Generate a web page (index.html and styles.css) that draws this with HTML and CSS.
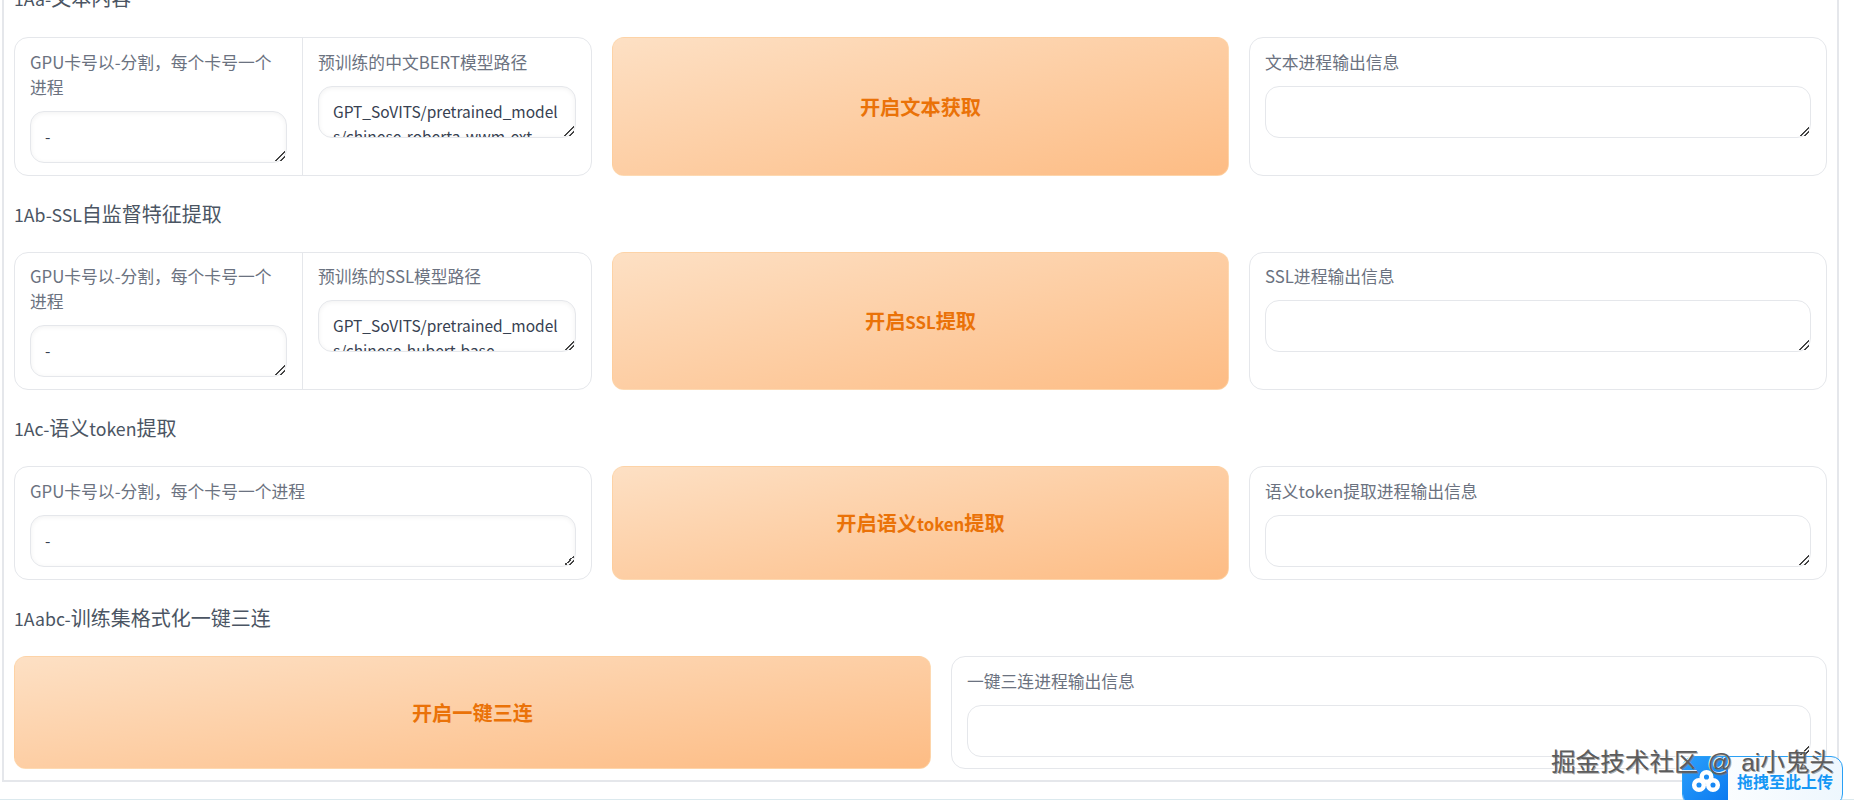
FILE: index.html
```html
<!DOCTYPE html>
<html lang="zh">
<head>
<meta charset="utf-8">
<title>GPT-SoVITS</title>
<link rel="stylesheet" href="styles.css">
</head>
<body>
<main class="frame">
  <h3 class="heading first"><span class="lat">1Aa-</span>文本内容</h3>
  <section class="row row-3">
    <div class="card split">
      <label class="field"><span class="label">GPU卡号以-分割，每个卡号一个进程</span><textarea class="box shaded" rows="2">-</textarea></label>
      <label class="field divided"><span class="label">预训练的中文BERT模型路径</span><textarea class="box shaded" rows="2">GPT_SoVITS/pretrained_models/chinese-roberta-wwm-ext-large</textarea></label>
    </div>
    <button class="action">开启文本获取</button>
    <label class="card field"><span class="label">文本进程输出信息</span><textarea class="box" rows="2"></textarea></label>
  </section>

  <h3 class="heading"><span class="lat">1Ab-SSL</span>自监督特征提取</h3>
  <section class="row row-3 mid">
    <div class="card split">
      <label class="field"><span class="label">GPU卡号以-分割，每个卡号一个进程</span><textarea class="box shaded" rows="2">-</textarea></label>
      <label class="field divided"><span class="label">预训练的SSL模型路径</span><textarea class="box shaded" rows="2">GPT_SoVITS/pretrained_models/chinese-hubert-base</textarea></label>
    </div>
    <button class="action">开启<span class="lat">SSL</span>提取</button>
    <label class="card field"><span class="label">SSL进程输出信息</span><textarea class="box" rows="2"></textarea></label>
  </section>

  <h3 class="heading"><span class="lat">1Ac-</span>语义<span class="lat">token</span>提取</h3>
  <section class="row row-3 short">
    <label class="card field"><span class="label">GPU卡号以-分割，每个卡号一个进程</span><textarea class="box shaded" rows="2">-</textarea></label>
    <button class="action">开启语义<span class="lat">token</span>提取</button>
    <label class="card field"><span class="label">语义token提取进程输出信息</span><textarea class="box" rows="2"></textarea></label>
  </section>

  <h3 class="heading"><span class="lat">1Aabc-</span>训练集格式化一键三连</h3>
  <section class="row row-2">
    <button class="action">开启一键三连</button>
    <label class="card field"><span class="label">一键三连进程输出信息</span><textarea class="box" rows="2"></textarea></label>
  </section>
</main>
<div class="bottom-line"></div>
<aside class="upload">
  <span class="upload-icon">
    <svg viewBox="0 0 46 44" width="46" height="44" aria-hidden="true">
      <g fill="none" stroke="#fff" stroke-width="4.5">
        <circle cx="16" cy="28" r="4.8"/>
        <circle cx="30" cy="28" r="4.8"/>
        <circle cx="23.5" cy="20" r="4.8"/>
      </g>
    </svg>
  </span>
  <span class="upload-text">拖拽至此上传</span>
</aside>
<div class="watermark">掘金技术社区 @ ai小鬼头</div>
</body>
</html>
```
FILE: styles.css
```css
* { box-sizing: border-box; }
html, body { margin: 0; height: 800px; overflow: hidden; background: #fff; }
body {
  font-family: "Noto Sans CJK SC", "Noto Sans", sans-serif;
  color: #374151;
  position: relative;
}
.frame {
  margin: -19px 15px 0 2px;
  height: 801px;
  border: 2px solid #e5e7eb;
  border-top: 0;
  padding: 0 10px;
  background: #fff;
}
.heading {
  margin: 0;
  height: 76px;
  padding-top: 25px;
  font-size: 20px;
  line-height: 26px;
  font-weight: 400;
  color: #4b5563;
}
.heading .lat { font-size: .885em; }
.heading.first { height: 56px; padding-top: 4px; }
.row { display: grid; column-gap: 20px; }
.row-3 { grid-template-columns: 578px 617px 578px; height: 139px; }
.row-3.mid { height: 138px; }
.row-3.short { height: 114px; }
.row-2 { grid-template-columns: 917px 876px; height: 113px; }
.card {
  border: 1px solid #e5e7eb;
  border-radius: 14px;
  background: #fff;
  min-width: 0;
}
.split { display: grid; grid-template-columns: 287px 1fr; }
.divided { border-left: 1px solid #e5e7eb; }
.field { display: flex; flex-direction: column; padding: 12px 15px 0; }
.mid .field { padding-top: 11px; }
.label {
  font-size: 16.8px;
  line-height: 25px;
  color: #6b7280;
  margin-bottom: 11px;
}
.box {
  display: block;
  width: 100%;
  height: 52px;
  padding: 12px 14px 0;
  border: 1px solid #e5e7eb;
  border-radius: 14px;
  font: 15.5px/25px "Noto Sans CJK SC", "Noto Sans", sans-serif;
  color: #374151;
  background: #fff;
  overflow: hidden;
  overflow-wrap: anywhere;
  outline: none;
}
.box::-webkit-resizer {
  background: linear-gradient(135deg, transparent 50%, #444 50%, #444 60%, transparent 60%, transparent 74%, #444 74%, #444 84%, transparent 84%) no-repeat right 1px bottom 1px / 10px 10px;
}
.box.shaded { box-shadow: inset 0 1px 5px rgba(0, 0, 0, .06); }
.action {
  border: 1px solid rgba(254, 215, 170, .6);
  border-radius: 12px;
  background: linear-gradient(to bottom right, #fde0c4, #fdbc84);
  color: #ea7208;
  font: 700 20.2px/26px "Noto Sans CJK SC", "Noto Sans", sans-serif;
}
.action .lat { font-size: .83em; }
.bottom-line { position: absolute; left: 0; right: 0; top: 799px; height: 1px; background: #dbe9ee; }
.upload {
  position: absolute;
  left: 1682px;
  top: 756px;
  width: 161px;
  height: 50px;
  display: flex;
  border: 1px solid #2aa0f5;
  border-radius: 12px;
  background: linear-gradient(90deg, #fff, #eef7fe);
  overflow: hidden;
}
.upload-icon { width: 45px; background: linear-gradient(135deg, #2ba0fb, #0a78f0); flex: none; }
.upload-text {
  padding: 13px 0 0 9px;
  color: #1597f5;
  font-size: 16px;
  line-height: 22px;
  font-weight: 700;
  white-space: nowrap;
}
.watermark {
  position: absolute;
  left: 1551px;
  top: 745px;
  font-family: "Liberation Sans", "Noto Sans CJK SC", sans-serif;
  font-size: 24.6px;
  line-height: 36px;
  word-spacing: 2px;
  color: #5c5c5c;
  white-space: nowrap;
  text-shadow: 1px 1px 0 rgba(120, 120, 120, .6), -1px -1px 0 rgba(255, 255, 255, .85);
}
```
